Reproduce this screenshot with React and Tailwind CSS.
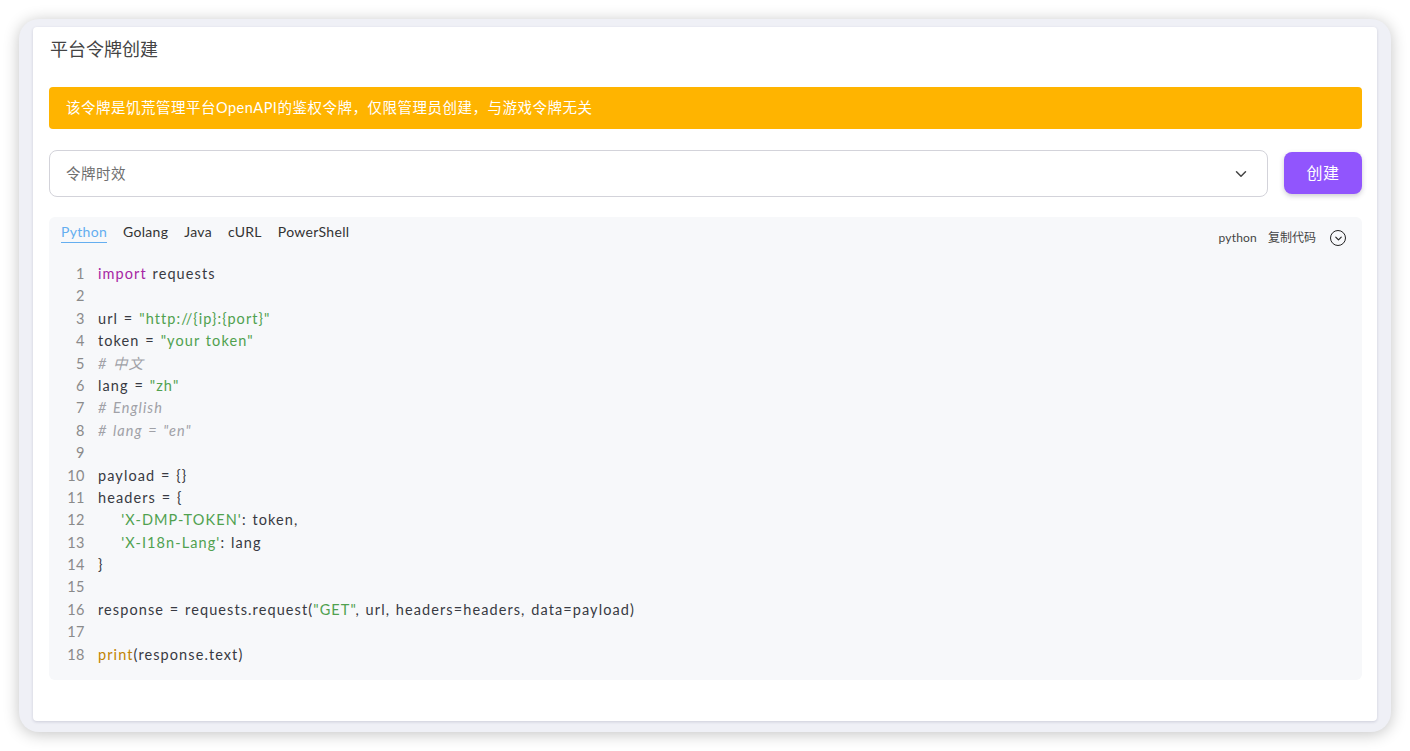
import React from "react";
import { ChevronDown } from "lucide-react";

const FONT = "font-['Lato','Noto_Sans_CJK_SC',sans-serif]";

const kw = "text-[#a626a4]";
const str = "text-[#50a14f]";
const cm = "text-[#a0a1a7] italic";
const fn = "text-[#c18401]";

const LINES = [
  [["import", kw], [" requests"]],
  [],
  [["url = "], ['"http://{ip}:{port}"', str]],
  [["token = "], ['"your token"', str]],
  [["# 中文", cm]],
  [["lang = "], ['"zh"', str]],
  [["# English", cm]],
  [['# lang = "en"', cm]],
  [],
  [["payload = {}"]],
  [["headers = {"]],
  [["    "], ["'X-DMP-TOKEN'", str], [": token,"]],
  [["    "], ["'X-I18n-Lang'", str], [": lang"]],
  [["}"]],
  [],
  [["response = requests.request("], ['"GET"', str], [", url, headers=headers, data=payload)"]],
  [],
  [["print", fn], ["(response.text)"]],
];

const TABS = ["Python", "Golang", "Java", "cURL", "PowerShell"];

export default function App() {
  return (
    <div className={`h-[751px] w-[1410px] overflow-hidden bg-white p-[19px] ${FONT}`}>
      <div className="h-[713px] rounded-[20px] bg-[#eff0f6] pt-2 pr-[14px] pb-[11px] pl-[14px] shadow-[0_2px_16px_rgba(0,0,0,0.24)]">
        <div className="h-[694px] rounded-[4px] bg-white pt-[10px] pr-[15px] pl-4 shadow-[0_1px_3px_rgba(70,70,110,0.2)]">
          <h1 className="pl-px text-[18px] leading-[24px] font-normal text-[#444]">平台令牌创建</h1>
          <div className="mt-[26px] flex h-[42px] items-center rounded-[4px] bg-[#ffb400] px-[17px] text-[14.5px] tracking-[0.5px] text-white">
            该令牌是饥荒管理平台OpenAPI的鉴权令牌，仅限管理员创建，与游戏令牌无关
          </div>
          <div className="mt-[21px] flex items-start gap-4">
            <div className="flex h-[47px] flex-1 items-center justify-between rounded-[8px] border border-[#d3d3da] pr-[17px] pl-4 text-[14.5px] tracking-[0.5px] text-[#6f6f6f]">
              <span>令牌时效</span>
              <ChevronDown size={18} strokeWidth={2} className="text-[#444]" />
            </div>
            <button className="mt-[2px] h-[42px] w-[78px] rounded-[8px] bg-[#9155fd] text-[16px] tracking-[0.6px] text-white shadow-[0_2px_5px_rgba(60,50,80,0.25)]">
              创建
            </button>
          </div>
          <div className="mt-5 h-[463px] rounded-[6px] bg-[#f7f8fa] pt-[5px] pr-4 pl-3">
            <div className="flex items-start justify-between">
              <div className="flex gap-4 text-[14px] leading-[20px] tracking-[0.3px] text-[#333]">
                {TABS.map((t, i) => (
                  <span key={t} className={i === 0 ? "border-b border-[#64aef0] text-[#64aef0]" : ""}>
                    {t}
                  </span>
                ))}
              </div>
              <div className="mt-[7px] flex items-center text-[12px] leading-[18px] tracking-[0.2px] text-[#444]">
                <span>python</span>
                <span className="ml-[11px] tracking-normal">复制代码</span>
                <span className="ml-[14px] flex h-[16px] w-[16px] items-center justify-center rounded-full border-[1.5px] border-[#222]">
                  <ChevronDown size={11} strokeWidth={2.5} className="text-[#222]" />
                </span>
              </div>
            </div>
            <div className="mt-[16px] text-[14.5px] leading-[22.4px] tracking-[1.09px] [word-spacing:1px] text-[#383a42]">
              {LINES.map((segs, i) => (
                <div key={i} className="flex h-[22.4px]">
                  <span className="w-[24px] shrink-0 text-right tracking-[0.5px] text-[#8a8a8a]">{i + 1}</span>
                  <span className="ml-[13px] whitespace-pre">
                    {segs.map(([text, cls], j) => (
                      <span key={j} className={cls}>
                        {text}
                      </span>
                    ))}
                  </span>
                </div>
              ))}
            </div>
          </div>
        </div>
      </div>
    </div>
  );
}
